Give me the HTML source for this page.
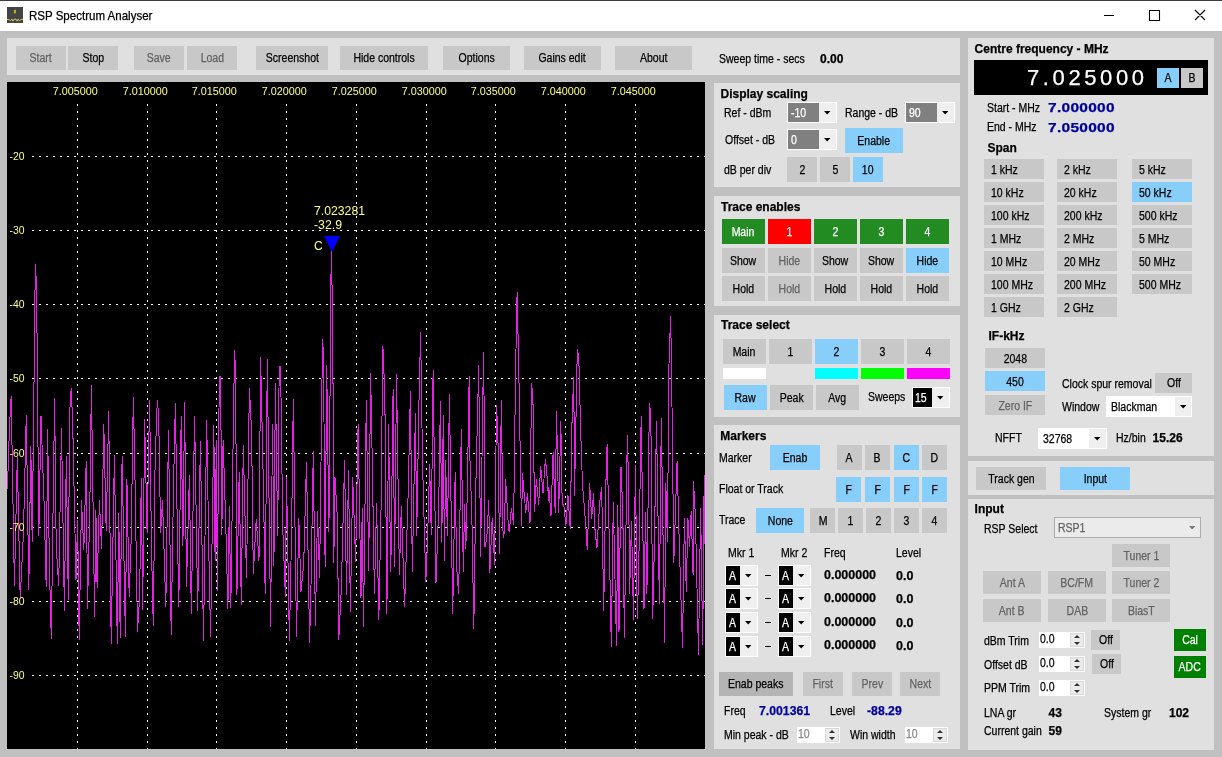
<!DOCTYPE html>
<html lang="en"><head><meta charset="utf-8"><title>RSP Spectrum Analyser</title><style>
html,body{margin:0;padding:0}
body{width:1222px;height:757px;overflow:hidden;position:relative;background:#c0c0c0;font-family:"Liberation Sans",sans-serif;font-size:12px;color:#000}
#w{position:absolute;left:0;top:0;width:1222px;height:757px;will-change:transform}
#w>div{position:absolute}
#w>svg{position:absolute;display:block}
.t,.n{-webkit-text-stroke:0.25px currentColor}
.b{display:flex;align-items:center;justify-content:center;white-space:nowrap;box-sizing:content-box}
.b.l{justify-content:flex-start}
.n{display:inline-block;transform:scaleX(.875)}
.ol{transform-origin:0 50%}
.bd{display:inline-block;font-weight:bold}
.t{white-space:nowrap;transform-origin:0 50%}
</style></head>
<body>
<div id="w">
<div style="left:0px;top:0px;width:1222px;height:31px;background:#fff;"></div>
<div style="left:0px;top:0px;width:1222px;height:1px;background:#3c3c3c;"></div>
<svg style="left:7px;top:7px" width="16" height="16" viewBox="0 0 16 16"><rect width="16" height="16" fill="#444"/><rect x="6.8" y="2.8" width="2.2" height="3.6" fill="#c9a227"/><path d="M0 12.3L2 12.5L3.5 13.8L5 12L6 14.2L7 12.2H9L10 14.2L11 12L12.5 13.8L14 12.5L16 12.3" stroke="#d8c060" stroke-width="1" fill="none"/></svg>
<div class="t" style="left:28.5px;top:8.7px;font-size:12px;line-height:14px;color:#000;transform:scaleX(0.93);font-size:12.4px;">RSP Spectrum Analyser</div>
<svg style="left:1100px;top:5px" width="112" height="22" viewBox="0 0 112 22"><path d="M4 10.5H14 M49.5 5.5H59.5V15.5H49.5Z M95 5L105 15 M105 5L95 15" stroke="#000" stroke-width="1.1" fill="none"/></svg>
<div style="left:7px;top:38px;width:953px;height:37px;background:#e0e0e0;"></div>
<div class="b" style="left:16px;top:46px;width:50px;height:24px;background:#c8c8c8;color:#636363;"><span class="n">Start</span></div>
<div class="b" style="left:68px;top:46px;width:50px;height:24px;background:#c8c8c8;color:#000;"><span class="n">Stop</span></div>
<div class="b" style="left:134px;top:46px;width:50px;height:24px;background:#c8c8c8;color:#636363;"><span class="n">Save</span></div>
<div class="b" style="left:187px;top:46px;width:50px;height:24px;background:#c8c8c8;color:#636363;"><span class="n">Load</span></div>
<div class="b" style="left:256px;top:46px;width:72px;height:24px;background:#c8c8c8;color:#000;"><span class="n">Screenshot</span></div>
<div class="b" style="left:340px;top:46px;width:88px;height:24px;background:#c8c8c8;color:#000;"><span class="n">Hide controls</span></div>
<div class="b" style="left:443px;top:46px;width:67px;height:24px;background:#c8c8c8;color:#000;"><span class="n">Options</span></div>
<div class="b" style="left:524px;top:46px;width:77px;height:24px;background:#c8c8c8;color:#000;"><span class="n">Gains edit</span></div>
<div class="b" style="left:615px;top:46px;width:77px;height:24px;background:#c8c8c8;color:#000;"><span class="n">About</span></div>
<div class="t" style="left:719px;top:51.8px;font-size:12px;line-height:14px;color:#000;transform:scaleX(0.875);">Sweep time - secs</div>
<div class="t" style="left:820px;top:51.8px;font-size:12px;line-height:14px;color:#000;font-weight:bold;">0.00</div>
<svg style="left:7px;top:82px" width="698" height="667" viewBox="0 0 698 667"><rect width="698" height="667" fill="#000"/><g stroke="#fff" stroke-width="1" stroke-dasharray="2 5" fill="none" shape-rendering="crispEdges"><path d="M25 74.5H698"/><path d="M25 148.5H698"/><path d="M25 222.5H698"/><path d="M25 296.5H698"/><path d="M25 371.5H698"/><path d="M25 445.5H698"/><path d="M25 519.5H698"/><path d="M25 593.5H698"/><path d="M70.5 22V667"/><path d="M140.5 22V667"/><path d="M209.5 22V667"/><path d="M279.5 22V667"/><path d="M349.5 22V667"/><path d="M419.5 22V667"/><path d="M488.5 22V667"/><path d="M558.5 22V667"/><path d="M628.5 22V667"/></g><polyline points="0.4,407.0 2.5,344.2 4.2,314.2 7.4,503.8 10.3,375.1 13.2,516.3 16.4,452.7 19.3,332.8 21.8,507.6 23.8,364.5 25.2,460.3 26.7,329.9 28.3,181.9 29.6,203.7 31.8,453.7 34.0,333.8 37.1,421.8 39.2,504.7 40.7,346.8 42.3,480.6 44.3,556.7 47.6,316.1 49.2,464.0 51.7,503.8 54.5,346.3 57.4,528.8 59.3,374.2 61.3,518.2 62.6,331.8 64.2,305.9 65.7,341.5 69.0,498.0 70.6,438.1 72.2,557.6 74.5,418.5 76.8,468.4 79.2,379.0 80.5,526.8 82.8,425.8 84.4,302.8 87.6,534.5 88.9,428.4 90.1,505.7 92.4,418.0 94.6,467.3 96.8,342.4 99.2,449.4 101.7,329.0 104.2,562.4 107.4,373.2 110.3,562.4 111.8,430.7 113.2,555.7 115.1,374.2 118.4,554.7 119.9,397.2 122.2,515.3 124.2,457.0 126.3,314.9 127.6,372.2 130.5,549.9 132.6,515.6 134.3,396.3 135.7,527.8 137.6,336.7 140.1,450.7 142.6,318.0 144.5,467.0 146.3,544.2 148.1,380.1 150.3,318.0 151.7,333.8 153.6,451.4 155.5,418.4 158.8,524.9 161.5,348.2 164.2,552.8 166.4,409.6 168.4,320.7 170.1,432.6 171.8,524.9 174.2,333.8 175.9,464.1 177.6,319.9 179.5,504.7 182.4,393.4 184.3,531.7 187.6,333.8 190.7,528.8 193.4,358.8 196.5,558.6 199.7,337.6 202.2,490.5 203.6,554.7 206.8,343.4 208.1,479.4 209.3,357.8 210.3,508.6 212.3,295.0 213.6,294.2 214.8,452.7 216.1,357.8 218.7,439.7 220.9,526.8 222.3,423.6 223.8,525.9 226.7,318.4 227.6,268.0 228.6,293.0 229.9,513.4 232.2,390.5 234.3,523.0 236.3,363.0 239.5,496.1 242.4,305.9 244.6,349.9 246.3,492.2 249.2,437.3 252.0,478.8 253.6,274.7 256.6,414.6 258.2,512.4 260.3,277.2 263.6,545.1 265.5,342.4 266.9,484.0 268.4,301.3 270.7,453.8 272.2,284.0 273.6,284.0 275.7,444.3 278.4,515.3 279.5,395.3 282.4,559.2 284.5,454.6 286.3,316.8 289.5,555.3 291.8,435.6 294.0,509.5 296.7,481.9 299.5,379.9 302.6,560.5 304.0,503.0 306.3,369.3 308.4,544.2 310.5,429.5 312.6,496.1 315.5,257.0 316.5,273.4 318.1,485.1 319.7,283.0 321.9,449.8 324.2,169.5 325.7,229.5 326.8,480.6 328.0,395.3 330.2,433.5 331.8,557.6 334.3,507.8 337.6,378.0 339.5,513.4 341.5,387.6 343.4,529.7 345.7,395.3 348.6,479.7 351.1,342.4 354.0,516.3 355.2,425.8 356.5,545.1 359.3,318.0 361.7,489.3 363.6,290.7 365.5,391.5 367.4,512.4 369.6,420.9 371.8,538.4 374.2,419.0 375.7,263.8 376.5,271.5 378.1,336.1 379.9,531.7 381.5,342.4 383.8,490.3 386.1,306.8 387.6,484.5 389.5,292.0 392.4,493.2 394.3,424.2 397.6,524.9 401.2,410.4 403.4,308.8 405.3,490.3 408.4,330.9 409.7,453.8 412.1,312.8 413.6,249.9 415.5,379.0 418.8,499.9 420.6,456.6 422.6,381.8 424.3,452.5 426.1,288.2 429.0,500.9 431.7,425.5 433.4,319.3 434.8,459.7 436.3,332.8 437.4,479.0 438.6,378.0 440.5,453.8 442.4,311.7 445.7,531.7 448.2,390.5 449.6,484.9 451.7,512.4 454.3,347.2 456.3,490.3 457.5,422.1 458.8,467.2 460.2,414.4 462.2,294.5 463.0,379.0 464.9,436.1 466.8,547.0 468.9,400.9 471.7,283.0 473.6,474.9 476.5,269.9 477.4,346.3 478.0,465.3 479.8,455.8 481.8,418.4 482.8,491.3 485.2,435.8 487.6,482.6 489.5,323.2 490.9,353.0 492.6,472.3 494.3,318.0 496.1,455.7 497.3,451.0 498.6,397.2 501.6,448.0 502.4,449.9 504.3,426.1 506.6,442.6 508.6,287.8 510.1,209.9 511.7,283.0 514.5,444.0 515.5,391.5 518.8,431.0 520.3,410.7 523.0,441.0 524.5,301.3 525.9,314.5 527.6,429.6 529.3,397.2 531.7,422.5 533.6,383.8 536.0,411.0 538.4,377.0 540.1,394.7 541.7,419.0 541.8,404.9 544.0,433.6 546.1,370.3 548.2,431.0 549.5,329.0 551.7,431.0 553.8,339.5 555.2,422.4 556.7,422.2 558.9,444.0 561.0,413.3 563.2,446.9 565.2,329.6 566.8,294.9 567.5,414.0 570.3,267.0 571.8,276.3 573.6,346.3 575.5,403.0 577.4,425.4 579.0,447.0 580.3,468.2 582.6,401.1 584.7,436.8 586.5,410.7 587.7,444.4 589.9,466.3 592.7,420.9 594.7,404.9 596.7,528.8 598.7,407.9 600.1,362.0 602.1,450.5 604.3,565.3 606.3,420.3 609.5,564.3 610.8,423.0 612.0,549.9 614.0,384.7 615.8,429.5 617.4,555.7 620.3,353.0 621.7,405.9 622.6,511.5 624.5,439.1 626.5,538.4 628.4,382.8 630.3,537.4 631.7,489.1 634.2,333.8 637.0,526.8 638.5,430.5 639.9,511.5 642.4,321.3 643.8,331.8 645.7,536.5 647.2,472.1 649.5,338.6 652.4,522.0 654.3,336.1 657.6,560.5 658.8,401.1 660.4,459.9 662.0,282.0 663.6,234.0 664.5,281.1 666.8,480.7 670.1,379.0 672.1,454.6 675.5,566.3 677.4,435.9 679.3,509.5 680.9,435.7 682.5,465.2 684.2,429.0 686.1,493.2 686.5,399.2 688.4,433.9 691.5,572.6 693.6,426.2 695.7,563.4 697.2,393.4 698.2,478.0" fill="none" stroke="#e620e6" stroke-width="1" stroke-linejoin="miter" stroke-miterlimit="2" shape-rendering="crispEdges"/><polygon points="317,154 333,154 325,170" fill="#0000ff"/><g fill="#ffff80" font-family="Liberation Sans, sans-serif" font-size="11.5"><text x="68.2" y="13" text-anchor="middle" textLength="45" lengthAdjust="spacingAndGlyphs">7.005000</text><text x="138.2" y="13" text-anchor="middle" textLength="45" lengthAdjust="spacingAndGlyphs">7.010000</text><text x="207.2" y="13" text-anchor="middle" textLength="45" lengthAdjust="spacingAndGlyphs">7.015000</text><text x="277.2" y="13" text-anchor="middle" textLength="45" lengthAdjust="spacingAndGlyphs">7.020000</text><text x="347.2" y="13" text-anchor="middle" textLength="45" lengthAdjust="spacingAndGlyphs">7.025000</text><text x="417.2" y="13" text-anchor="middle" textLength="45" lengthAdjust="spacingAndGlyphs">7.030000</text><text x="486.2" y="13" text-anchor="middle" textLength="45" lengthAdjust="spacingAndGlyphs">7.035000</text><text x="556.2" y="13" text-anchor="middle" textLength="45" lengthAdjust="spacingAndGlyphs">7.040000</text><text x="626.2" y="13" text-anchor="middle" textLength="45" lengthAdjust="spacingAndGlyphs">7.045000</text><text x="2.5" y="78.3" textLength="15" lengthAdjust="spacingAndGlyphs">-20</text><text x="2.5" y="152.3" textLength="15" lengthAdjust="spacingAndGlyphs">-30</text><text x="2.5" y="226.3" textLength="15" lengthAdjust="spacingAndGlyphs">-40</text><text x="2.5" y="300.3" textLength="15" lengthAdjust="spacingAndGlyphs">-50</text><text x="2.5" y="375.3" textLength="15" lengthAdjust="spacingAndGlyphs">-60</text><text x="2.5" y="449.3" textLength="15" lengthAdjust="spacingAndGlyphs">-70</text><text x="2.5" y="523.3" textLength="15" lengthAdjust="spacingAndGlyphs">-80</text><text x="2.5" y="597.3" textLength="15" lengthAdjust="spacingAndGlyphs">-90</text><text x="307" y="133" textLength="51" lengthAdjust="spacingAndGlyphs" font-size="12">7.023281</text><text x="307" y="147" textLength="28" lengthAdjust="spacingAndGlyphs" font-size="12">-32.9</text><text x="307" y="168" font-size="12">C</text></g></svg>
<div style="left:714px;top:83px;width:246px;height:104px;background:#e0e0e0;"></div>
<div class="t" style="left:720.5px;top:87.0px;font-size:12px;line-height:14px;color:#000;font-weight:bold;">Display scaling</div>
<div class="t" style="left:724.3px;top:106.4px;font-size:12px;line-height:14px;color:#000;transform:scaleX(0.875);">Ref - dBm</div>
<div style="left:787px;top:102px;width:50px;height:21px;background:#fff;"></div>
<div style="left:788px;top:103px;width:48px;height:19px;background:#efefef;"></div>
<div style="left:788px;top:103px;width:31px;height:19px;background:#808080;"></div>
<div class="t" style="left:791px;top:105.6px;font-size:12px;line-height:14px;color:#fff;transform:scaleX(0.875);">-10</div>
<svg style="left:824.3px;top:111.0px" width="6.4" height="3.6" viewBox="0 0 6.4 3.6"><polygon points="0,0 6.4,0 3.2,3.6" fill="#000"/></svg>
<div class="t" style="left:845.4px;top:106.4px;font-size:12px;line-height:14px;color:#000;transform:scaleX(0.875);">Range - dB</div>
<div style="left:905px;top:102px;width:50px;height:21px;background:#fff;"></div>
<div style="left:906px;top:103px;width:48px;height:19px;background:#efefef;"></div>
<div style="left:906px;top:103px;width:31px;height:19px;background:#808080;"></div>
<div class="t" style="left:909px;top:105.6px;font-size:12px;line-height:14px;color:#fff;transform:scaleX(0.875);">90</div>
<svg style="left:942.3px;top:111.0px" width="6.4" height="3.6" viewBox="0 0 6.4 3.6"><polygon points="0,0 6.4,0 3.2,3.6" fill="#000"/></svg>
<div class="t" style="left:725.4px;top:132.7px;font-size:12px;line-height:14px;color:#000;transform:scaleX(0.875);">Offset - dB</div>
<div style="left:787px;top:129px;width:50px;height:21px;background:#fff;"></div>
<div style="left:788px;top:130px;width:48px;height:19px;background:#efefef;"></div>
<div style="left:788px;top:130px;width:31px;height:19px;background:#808080;"></div>
<div class="t" style="left:791px;top:132.6px;font-size:12px;line-height:14px;color:#fff;transform:scaleX(0.875);">0</div>
<svg style="left:824.3px;top:138.0px" width="6.4" height="3.6" viewBox="0 0 6.4 3.6"><polygon points="0,0 6.4,0 3.2,3.6" fill="#000"/></svg>
<div class="b" style="left:845px;top:128px;width:58px;height:25px;background:#87cefa;color:#000;"><span class="n">Enable</span></div>
<div class="t" style="left:724.3px;top:162.8px;font-size:12px;line-height:14px;color:#000;transform:scaleX(0.875);">dB per div</div>
<div class="b" style="left:787px;top:157px;width:30px;height:25px;background:#c8c8c8;color:#000;"><span class="n">2</span></div>
<div class="b" style="left:820px;top:157px;width:30px;height:25px;background:#c8c8c8;color:#000;"><span class="n">5</span></div>
<div class="b" style="left:853px;top:157px;width:30px;height:25px;background:#87cefa;color:#000;"><span class="n">10</span></div>
<div style="left:714px;top:196px;width:246px;height:110px;background:#e0e0e0;"></div>
<div class="t" style="left:721px;top:199.8px;font-size:12px;line-height:14px;color:#000;font-weight:bold;">Trace enables</div>
<div class="b" style="left:722px;top:219px;width:43px;height:25px;background:#228b22;color:#fff;"><span class="n">Main</span></div>
<div class="b" style="left:768px;top:219px;width:43px;height:25px;background:#ff0000;color:#fff;"><span class="n">1</span></div>
<div class="b" style="left:814px;top:219px;width:43px;height:25px;background:#228b22;color:#fff;"><span class="n">2</span></div>
<div class="b" style="left:860px;top:219px;width:43px;height:25px;background:#228b22;color:#fff;"><span class="n">3</span></div>
<div class="b" style="left:906px;top:219px;width:43px;height:25px;background:#228b22;color:#fff;"><span class="n">4</span></div>
<div class="b" style="left:722px;top:248px;width:43px;height:25px;background:#c8c8c8;color:#000;"><span class="n">Show</span></div>
<div class="b" style="left:768px;top:248px;width:43px;height:25px;background:#c8c8c8;color:#636363;"><span class="n">Hide</span></div>
<div class="b" style="left:814px;top:248px;width:43px;height:25px;background:#c8c8c8;color:#000;"><span class="n">Show</span></div>
<div class="b" style="left:860px;top:248px;width:43px;height:25px;background:#c8c8c8;color:#000;"><span class="n">Show</span></div>
<div class="b" style="left:906px;top:248px;width:43px;height:25px;background:#87cefa;color:#000;"><span class="n">Hide</span></div>
<div class="b" style="left:722px;top:276px;width:43px;height:25px;background:#c8c8c8;color:#000;"><span class="n">Hold</span></div>
<div class="b" style="left:768px;top:276px;width:43px;height:25px;background:#c8c8c8;color:#636363;"><span class="n">Hold</span></div>
<div class="b" style="left:814px;top:276px;width:43px;height:25px;background:#c8c8c8;color:#000;"><span class="n">Hold</span></div>
<div class="b" style="left:860px;top:276px;width:43px;height:25px;background:#c8c8c8;color:#000;"><span class="n">Hold</span></div>
<div class="b" style="left:906px;top:276px;width:43px;height:25px;background:#c8c8c8;color:#000;"><span class="n">Hold</span></div>
<div style="left:714px;top:315px;width:246px;height:102px;background:#e0e0e0;"></div>
<div class="t" style="left:721px;top:317.7px;font-size:12px;line-height:14px;color:#000;font-weight:bold;">Trace select</div>
<div class="b" style="left:723px;top:339px;width:43px;height:25px;background:#c8c8c8;color:#000;"><span class="n">Main</span></div>
<div class="b" style="left:769px;top:339px;width:43px;height:25px;background:#c8c8c8;color:#000;"><span class="n">1</span></div>
<div class="b" style="left:815px;top:339px;width:43px;height:25px;background:#87cefa;color:#000;"><span class="n">2</span></div>
<div class="b" style="left:861px;top:339px;width:43px;height:25px;background:#c8c8c8;color:#000;"><span class="n">3</span></div>
<div class="b" style="left:907px;top:339px;width:43px;height:25px;background:#c8c8c8;color:#000;"><span class="n">4</span></div>
<div style="left:723px;top:368px;width:43px;height:11px;background:#fff;"></div>
<div style="left:815px;top:368px;width:43px;height:11px;background:#00ffff;"></div>
<div style="left:861px;top:368px;width:43px;height:11px;background:#00ff00;"></div>
<div style="left:907px;top:368px;width:43px;height:11px;background:#ff00ff;"></div>
<div class="b" style="left:724px;top:385px;width:43px;height:25px;background:#87cefa;color:#000;"><span class="n">Raw</span></div>
<div class="b" style="left:770px;top:385px;width:43px;height:25px;background:#c8c8c8;color:#000;"><span class="n">Peak</span></div>
<div class="b" style="left:816px;top:385px;width:43px;height:25px;background:#c8c8c8;color:#000;"><span class="n">Avg</span></div>
<div class="t" style="left:868.4px;top:390.3px;font-size:12px;line-height:14px;color:#000;transform:scaleX(0.875);">Sweeps</div>
<div style="left:912px;top:387px;width:38px;height:21px;background:#fff;"></div>
<div style="left:913px;top:388px;width:36px;height:19px;background:#efefef;"></div>
<div style="left:913px;top:388px;width:19px;height:19px;background:#000;"></div>
<div class="t" style="left:915px;top:390.6px;font-size:12px;line-height:14px;color:#fff;transform:scaleX(0.875);">15</div>
<svg style="left:937.3px;top:396.0px" width="6.4" height="3.6" viewBox="0 0 6.4 3.6"><polygon points="0,0 6.4,0 3.2,3.6" fill="#000"/></svg>
<div style="left:714px;top:425px;width:246px;height:324px;background:#e0e0e0;"></div>
<div class="t" style="left:720.3px;top:428.7px;font-size:12px;line-height:14px;color:#000;font-weight:bold;">Markers</div>
<div class="t" style="left:719.4px;top:451.4px;font-size:12px;line-height:14px;color:#000;transform:scaleX(0.875);">Marker</div>
<div class="b" style="left:770px;top:445px;width:50px;height:25px;background:#87cefa;color:#000;"><span class="n">Enab</span></div>
<div class="b" style="left:837px;top:445px;width:25px;height:25px;background:#c8c8c8;color:#000;"><span class="n">A</span></div>
<div class="b" style="left:865px;top:445px;width:25px;height:25px;background:#c8c8c8;color:#000;"><span class="n">B</span></div>
<div class="b" style="left:894px;top:445px;width:25px;height:25px;background:#87cefa;color:#000;"><span class="n">C</span></div>
<div class="b" style="left:922px;top:445px;width:25px;height:25px;background:#c8c8c8;color:#000;"><span class="n">D</span></div>
<div class="t" style="left:719.4px;top:481.7px;font-size:12px;line-height:14px;color:#000;transform:scaleX(0.875);">Float or Track</div>
<div class="b" style="left:836px;top:477px;width:25px;height:25px;background:#87cefa;color:#000;"><span class="n">F</span></div>
<div class="b" style="left:865px;top:477px;width:25px;height:25px;background:#87cefa;color:#000;"><span class="n">F</span></div>
<div class="b" style="left:894px;top:477px;width:25px;height:25px;background:#87cefa;color:#000;"><span class="n">F</span></div>
<div class="b" style="left:922px;top:477px;width:25px;height:25px;background:#87cefa;color:#000;"><span class="n">F</span></div>
<div class="t" style="left:719.4px;top:512.6px;font-size:12px;line-height:14px;color:#000;transform:scaleX(0.875);">Trace</div>
<div class="b" style="left:756px;top:508px;width:48px;height:25px;background:#87cefa;color:#000;"><span class="n">None</span></div>
<div class="b" style="left:810px;top:508px;width:25px;height:25px;background:#c8c8c8;color:#000;"><span class="n">M</span></div>
<div class="b" style="left:838px;top:508px;width:25px;height:25px;background:#c8c8c8;color:#000;"><span class="n">1</span></div>
<div class="b" style="left:866px;top:508px;width:25px;height:25px;background:#c8c8c8;color:#000;"><span class="n">2</span></div>
<div class="b" style="left:894px;top:508px;width:25px;height:25px;background:#c8c8c8;color:#000;"><span class="n">3</span></div>
<div class="b" style="left:922px;top:508px;width:25px;height:25px;background:#c8c8c8;color:#000;"><span class="n">4</span></div>
<div class="t" style="left:728.3px;top:545.9px;font-size:12px;line-height:14px;color:#000;transform:scaleX(0.875);">Mkr 1</div>
<div class="t" style="left:781.3px;top:545.9px;font-size:12px;line-height:14px;color:#000;transform:scaleX(0.875);">Mkr 2</div>
<div class="t" style="left:824.4px;top:545.9px;font-size:12px;line-height:14px;color:#000;transform:scaleX(0.875);">Freq</div>
<div class="t" style="left:896.2px;top:545.9px;font-size:12px;line-height:14px;color:#000;transform:scaleX(0.875);">Level</div>
<div style="left:725px;top:565px;width:33px;height:21px;background:#fff;"></div>
<div style="left:726px;top:566px;width:31px;height:19px;background:#efefef;"></div>
<div style="left:726px;top:566px;width:14px;height:19px;background:#000;"></div>
<div class="t" style="left:729px;top:568.6px;font-size:12px;line-height:14px;color:#fff;transform:scaleX(0.875);">A</div>
<svg style="left:745.3px;top:574.0px" width="6.4" height="3.6" viewBox="0 0 6.4 3.6"><polygon points="0,0 6.4,0 3.2,3.6" fill="#000"/></svg>
<div style="left:778px;top:565px;width:33px;height:21px;background:#fff;"></div>
<div style="left:779px;top:566px;width:31px;height:19px;background:#efefef;"></div>
<div style="left:779px;top:566px;width:14px;height:19px;background:#000;"></div>
<div class="t" style="left:782px;top:568.6px;font-size:12px;line-height:14px;color:#fff;transform:scaleX(0.875);">A</div>
<svg style="left:798.3px;top:574.0px" width="6.4" height="3.6" viewBox="0 0 6.4 3.6"><polygon points="0,0 6.4,0 3.2,3.6" fill="#000"/></svg>
<div style="left:764.5px;top:574.5px;width:6px;height:1px;background:#000;"></div>
<div class="t" style="left:824px;top:568.0px;font-size:12px;line-height:14px;color:#000;font-weight:bold;transform:scaleX(1.04);">0.000000</div>
<div class="t" style="left:895.8px;top:569.2px;font-size:12px;line-height:14px;color:#000;font-weight:bold;transform:scaleX(1.04);">0.0</div>
<div style="left:725px;top:588px;width:33px;height:21px;background:#fff;"></div>
<div style="left:726px;top:589px;width:31px;height:19px;background:#efefef;"></div>
<div style="left:726px;top:589px;width:14px;height:19px;background:#000;"></div>
<div class="t" style="left:729px;top:591.6px;font-size:12px;line-height:14px;color:#fff;transform:scaleX(0.875);">A</div>
<svg style="left:745.3px;top:597.0px" width="6.4" height="3.6" viewBox="0 0 6.4 3.6"><polygon points="0,0 6.4,0 3.2,3.6" fill="#000"/></svg>
<div style="left:778px;top:588px;width:33px;height:21px;background:#fff;"></div>
<div style="left:779px;top:589px;width:31px;height:19px;background:#efefef;"></div>
<div style="left:779px;top:589px;width:14px;height:19px;background:#000;"></div>
<div class="t" style="left:782px;top:591.6px;font-size:12px;line-height:14px;color:#fff;transform:scaleX(0.875);">A</div>
<svg style="left:798.3px;top:597.0px" width="6.4" height="3.6" viewBox="0 0 6.4 3.6"><polygon points="0,0 6.4,0 3.2,3.6" fill="#000"/></svg>
<div style="left:764.5px;top:597.5px;width:6px;height:1px;background:#000;"></div>
<div class="t" style="left:824px;top:591.0px;font-size:12px;line-height:14px;color:#000;font-weight:bold;transform:scaleX(1.04);">0.000000</div>
<div class="t" style="left:895.8px;top:592.2px;font-size:12px;line-height:14px;color:#000;font-weight:bold;transform:scaleX(1.04);">0.0</div>
<div style="left:725px;top:612px;width:33px;height:21px;background:#fff;"></div>
<div style="left:726px;top:613px;width:31px;height:19px;background:#efefef;"></div>
<div style="left:726px;top:613px;width:14px;height:19px;background:#000;"></div>
<div class="t" style="left:729px;top:615.6px;font-size:12px;line-height:14px;color:#fff;transform:scaleX(0.875);">A</div>
<svg style="left:745.3px;top:621.0px" width="6.4" height="3.6" viewBox="0 0 6.4 3.6"><polygon points="0,0 6.4,0 3.2,3.6" fill="#000"/></svg>
<div style="left:778px;top:612px;width:33px;height:21px;background:#fff;"></div>
<div style="left:779px;top:613px;width:31px;height:19px;background:#efefef;"></div>
<div style="left:779px;top:613px;width:14px;height:19px;background:#000;"></div>
<div class="t" style="left:782px;top:615.6px;font-size:12px;line-height:14px;color:#fff;transform:scaleX(0.875);">A</div>
<svg style="left:798.3px;top:621.0px" width="6.4" height="3.6" viewBox="0 0 6.4 3.6"><polygon points="0,0 6.4,0 3.2,3.6" fill="#000"/></svg>
<div style="left:764.5px;top:621.5px;width:6px;height:1px;background:#000;"></div>
<div class="t" style="left:824px;top:614.5px;font-size:12px;line-height:14px;color:#000;font-weight:bold;transform:scaleX(1.04);">0.000000</div>
<div class="t" style="left:895.8px;top:615.7px;font-size:12px;line-height:14px;color:#000;font-weight:bold;transform:scaleX(1.04);">0.0</div>
<div style="left:725px;top:636px;width:33px;height:21px;background:#fff;"></div>
<div style="left:726px;top:637px;width:31px;height:19px;background:#efefef;"></div>
<div style="left:726px;top:637px;width:14px;height:19px;background:#000;"></div>
<div class="t" style="left:729px;top:639.6px;font-size:12px;line-height:14px;color:#fff;transform:scaleX(0.875);">A</div>
<svg style="left:745.3px;top:645.0px" width="6.4" height="3.6" viewBox="0 0 6.4 3.6"><polygon points="0,0 6.4,0 3.2,3.6" fill="#000"/></svg>
<div style="left:778px;top:636px;width:33px;height:21px;background:#fff;"></div>
<div style="left:779px;top:637px;width:31px;height:19px;background:#efefef;"></div>
<div style="left:779px;top:637px;width:14px;height:19px;background:#000;"></div>
<div class="t" style="left:782px;top:639.6px;font-size:12px;line-height:14px;color:#fff;transform:scaleX(0.875);">A</div>
<svg style="left:798.3px;top:645.0px" width="6.4" height="3.6" viewBox="0 0 6.4 3.6"><polygon points="0,0 6.4,0 3.2,3.6" fill="#000"/></svg>
<div style="left:764.5px;top:645.5px;width:6px;height:1px;background:#000;"></div>
<div class="t" style="left:824px;top:637.7px;font-size:12px;line-height:14px;color:#000;font-weight:bold;transform:scaleX(1.04);">0.000000</div>
<div class="t" style="left:895.8px;top:638.9px;font-size:12px;line-height:14px;color:#000;font-weight:bold;transform:scaleX(1.04);">0.0</div>
<div class="b" style="left:719px;top:672px;width:74px;height:24px;background:#b4b4b4;color:#000;"><span class="n">Enab peaks</span></div>
<div class="b" style="left:803px;top:672px;width:40px;height:24px;background:#c8c8c8;color:#636363;"><span class="n">First</span></div>
<div class="b" style="left:852px;top:672px;width:40px;height:24px;background:#c8c8c8;color:#636363;"><span class="n">Prev</span></div>
<div class="b" style="left:900px;top:672px;width:40px;height:24px;background:#c8c8c8;color:#636363;"><span class="n">Next</span></div>
<div class="t" style="left:724.3px;top:703.5px;font-size:12px;line-height:14px;color:#000;transform:scaleX(0.875);">Freq</div>
<div class="t" style="left:758.6px;top:703.5px;font-size:12px;line-height:14px;color:#0000a0;font-weight:bold;transform:scaleX(1.02);">7.001361</div>
<div class="t" style="left:829.7px;top:703.5px;font-size:12px;line-height:14px;color:#000;transform:scaleX(0.875);">Level</div>
<div class="t" style="left:866.8px;top:703.5px;font-size:12px;line-height:14px;color:#0000a0;font-weight:bold;transform:scaleX(1.02);">-88.29</div>
<div class="t" style="left:724.3px;top:728.3px;font-size:12px;line-height:14px;color:#000;transform:scaleX(0.875);">Min peak - dB</div>
<div style="left:797px;top:727px;width:43px;height:16px;background:#fff;"></div>
<div style="left:825px;top:728px;width:14px;height:14px;background:#ececec;box-shadow:inset 0 0 0 1px #d8d8d8;"></div>
<svg style="left:829.0px;top:730px" width="6" height="3" viewBox="0 0 6 3"><polygon points="0,3 6,3 3,0" fill="#333"/></svg>
<svg style="left:829.0px;top:737px" width="6" height="3" viewBox="0 0 6 3"><polygon points="0,0 6,0 3,3" fill="#333"/></svg>
<div class="t" style="left:798px;top:726.6px;font-size:12px;line-height:14px;color:#8a8a8a;transform:scaleX(0.875);">10</div>
<div class="t" style="left:850.2px;top:728.3px;font-size:12px;line-height:14px;color:#000;transform:scaleX(0.875);">Win width</div>
<div style="left:905px;top:727px;width:43px;height:16px;background:#fff;"></div>
<div style="left:933px;top:728px;width:14px;height:14px;background:#ececec;box-shadow:inset 0 0 0 1px #d8d8d8;"></div>
<svg style="left:937.0px;top:730px" width="6" height="3" viewBox="0 0 6 3"><polygon points="0,3 6,3 3,0" fill="#333"/></svg>
<svg style="left:937.0px;top:737px" width="6" height="3" viewBox="0 0 6 3"><polygon points="0,0 6,0 3,3" fill="#333"/></svg>
<div class="t" style="left:906px;top:726.6px;font-size:12px;line-height:14px;color:#8a8a8a;transform:scaleX(0.875);">10</div>
<div style="left:968px;top:38px;width:246px;height:418px;background:#e0e0e0;"></div>
<div class="t" style="left:974.6px;top:41.7px;font-size:12px;line-height:14px;color:#000;font-weight:bold;">Centre frequency - MHz</div>
<div style="left:974px;top:60px;width:234px;height:35px;background:#000;"></div>
<div class="t" style="left:1027px;top:65.7px;font-size:22px;line-height:24px;color:#fff;letter-spacing:3.6px;">7.025000</div>
<div class="b" style="left:1157px;top:68px;width:22px;height:20px;background:#87cefa;color:#000;"><span class="n">A</span></div>
<div class="b" style="left:1181px;top:68px;width:22px;height:20px;background:#c8c8c8;color:#000;"><span class="n">B</span></div>
<div class="t" style="left:987.4px;top:100.7px;font-size:12px;line-height:14px;color:#000;transform:scaleX(0.875);">Start - MHz</div>
<div class="t" style="left:1047.9px;top:100.0px;font-size:13px;line-height:15px;color:#00009c;font-weight:bold;transform:scaleX(1.19);letter-spacing:0.25px;">7.000000</div>
<div class="t" style="left:987.4px;top:120.0px;font-size:12px;line-height:14px;color:#000;transform:scaleX(0.875);">End - MHz</div>
<div class="t" style="left:1047.9px;top:120.0px;font-size:13px;line-height:15px;color:#00009c;font-weight:bold;transform:scaleX(1.19);letter-spacing:0.25px;">7.050000</div>
<div class="t" style="left:987.4px;top:140.6px;font-size:12px;line-height:14px;color:#000;font-weight:bold;">Span</div>
<div class="b l" style="left:984px;top:159px;width:60px;height:20px;background:#c8c8c8;color:#000;padding-left:7px;width:53px;"><span class="n ol" style="position:relative;top:1px">1 kHz</span></div>
<div class="b l" style="left:1057px;top:159px;width:60px;height:20px;background:#c8c8c8;color:#000;padding-left:7px;width:53px;"><span class="n ol" style="position:relative;top:1px">2 kHz</span></div>
<div class="b l" style="left:1132px;top:159px;width:60px;height:20px;background:#c8c8c8;color:#000;padding-left:7px;width:53px;"><span class="n ol" style="position:relative;top:1px">5 kHz</span></div>
<div class="b l" style="left:984px;top:182px;width:60px;height:20px;background:#c8c8c8;color:#000;padding-left:7px;width:53px;"><span class="n ol" style="position:relative;top:1px">10 kHz</span></div>
<div class="b l" style="left:1057px;top:182px;width:60px;height:20px;background:#c8c8c8;color:#000;padding-left:7px;width:53px;"><span class="n ol" style="position:relative;top:1px">20 kHz</span></div>
<div class="b l" style="left:1132px;top:182px;width:60px;height:20px;background:#87cefa;color:#000;padding-left:7px;width:53px;"><span class="n ol" style="position:relative;top:1px">50 kHz</span></div>
<div class="b l" style="left:984px;top:205px;width:60px;height:20px;background:#c8c8c8;color:#000;padding-left:7px;width:53px;"><span class="n ol" style="position:relative;top:1px">100 kHz</span></div>
<div class="b l" style="left:1057px;top:205px;width:60px;height:20px;background:#c8c8c8;color:#000;padding-left:7px;width:53px;"><span class="n ol" style="position:relative;top:1px">200 kHz</span></div>
<div class="b l" style="left:1132px;top:205px;width:60px;height:20px;background:#c8c8c8;color:#000;padding-left:7px;width:53px;"><span class="n ol" style="position:relative;top:1px">500 kHz</span></div>
<div class="b l" style="left:984px;top:228px;width:60px;height:20px;background:#c8c8c8;color:#000;padding-left:7px;width:53px;"><span class="n ol" style="position:relative;top:1px">1 MHz</span></div>
<div class="b l" style="left:1057px;top:228px;width:60px;height:20px;background:#c8c8c8;color:#000;padding-left:7px;width:53px;"><span class="n ol" style="position:relative;top:1px">2 MHz</span></div>
<div class="b l" style="left:1132px;top:228px;width:60px;height:20px;background:#c8c8c8;color:#000;padding-left:7px;width:53px;"><span class="n ol" style="position:relative;top:1px">5 MHz</span></div>
<div class="b l" style="left:984px;top:251px;width:60px;height:20px;background:#c8c8c8;color:#000;padding-left:7px;width:53px;"><span class="n ol" style="position:relative;top:1px">10 MHz</span></div>
<div class="b l" style="left:1057px;top:251px;width:60px;height:20px;background:#c8c8c8;color:#000;padding-left:7px;width:53px;"><span class="n ol" style="position:relative;top:1px">20 MHz</span></div>
<div class="b l" style="left:1132px;top:251px;width:60px;height:20px;background:#c8c8c8;color:#000;padding-left:7px;width:53px;"><span class="n ol" style="position:relative;top:1px">50 MHz</span></div>
<div class="b l" style="left:984px;top:274px;width:60px;height:20px;background:#c8c8c8;color:#000;padding-left:7px;width:53px;"><span class="n ol" style="position:relative;top:1px">100 MHz</span></div>
<div class="b l" style="left:1057px;top:274px;width:60px;height:20px;background:#c8c8c8;color:#000;padding-left:7px;width:53px;"><span class="n ol" style="position:relative;top:1px">200 MHz</span></div>
<div class="b l" style="left:1132px;top:274px;width:60px;height:20px;background:#c8c8c8;color:#000;padding-left:7px;width:53px;"><span class="n ol" style="position:relative;top:1px">500 MHz</span></div>
<div class="b l" style="left:984px;top:297px;width:60px;height:20px;background:#c8c8c8;color:#000;padding-left:7px;width:53px;"><span class="n ol" style="position:relative;top:1px">1 GHz</span></div>
<div class="b l" style="left:1057px;top:297px;width:60px;height:20px;background:#c8c8c8;color:#000;padding-left:7px;width:53px;"><span class="n ol" style="position:relative;top:1px">2 GHz</span></div>
<div class="t" style="left:988.5px;top:329.0px;font-size:12px;line-height:14px;color:#000;font-weight:bold;">IF-kHz</div>
<div class="b" style="left:985px;top:348px;width:60px;height:20px;background:#c8c8c8;color:#000;"><span class="n" style="position:relative;top:1px">2048</span></div>
<div class="b" style="left:985px;top:371px;width:60px;height:20px;background:#87cefa;color:#000;"><span class="n" style="position:relative;top:1px">450</span></div>
<div class="b" style="left:985px;top:395px;width:60px;height:20px;background:#c8c8c8;color:#636363;"><span class="n" style="position:relative;top:1px">Zero IF</span></div>
<div class="t" style="left:1061.5px;top:376.6px;font-size:12px;line-height:14px;color:#000;transform:scaleX(0.875);">Clock spur removal</div>
<div class="b" style="left:1155px;top:373px;width:37px;height:20px;background:#c8c8c8;color:#000;"><span class="n">Off</span></div>
<div class="t" style="left:1061.5px;top:399.6px;font-size:12px;line-height:14px;color:#000;transform:scaleX(0.875);">Window</div>
<div style="left:1106px;top:396px;width:86px;height:21px;background:#fff;"></div>
<div style="left:1107px;top:397px;width:84px;height:19px;background:#efefef;"></div>
<div style="left:1107px;top:397px;width:68px;height:19px;background:#fff;"></div>
<div class="t" style="left:1111px;top:399.6px;font-size:12px;line-height:14px;color:#000;transform:scaleX(0.875);">Blackman</div>
<svg style="left:1179.8px;top:405.0px" width="6.4" height="3.6" viewBox="0 0 6.4 3.6"><polygon points="0,0 6.4,0 3.2,3.6" fill="#000"/></svg>
<div class="t" style="left:994.5px;top:431.2px;font-size:12px;line-height:14px;color:#000;transform:scaleX(0.875);">NFFT</div>
<div style="left:1038px;top:428px;width:69px;height:21px;background:#fff;"></div>
<div style="left:1039px;top:429px;width:67px;height:19px;background:#efefef;"></div>
<div style="left:1039px;top:429px;width:50px;height:19px;background:#fff;"></div>
<div class="t" style="left:1043px;top:431.6px;font-size:12px;line-height:14px;color:#000;transform:scaleX(0.875);">32768</div>
<svg style="left:1094.3px;top:437.0px" width="6.4" height="3.6" viewBox="0 0 6.4 3.6"><polygon points="0,0 6.4,0 3.2,3.6" fill="#000"/></svg>
<div class="t" style="left:1116.2px;top:431.2px;font-size:12px;line-height:14px;color:#000;transform:scaleX(0.875);">Hz/bin</div>
<div class="t" style="left:1152.6px;top:431.2px;font-size:12px;line-height:14px;color:#000;font-weight:bold;">15.26</div>
<div style="left:968px;top:461px;width:246px;height:34px;background:#e0e0e0;"></div>
<div class="b" style="left:976px;top:467px;width:70px;height:23px;background:#c8c8c8;color:#000;"><span class="n">Track gen</span></div>
<div class="b" style="left:1060px;top:467px;width:70px;height:23px;background:#87cefa;color:#000;"><span class="n">Input</span></div>
<div style="left:968px;top:499px;width:246px;height:251px;background:#e0e0e0;"></div>
<div class="t" style="left:974.6px;top:501.7px;font-size:12px;line-height:14px;color:#000;font-weight:bold;">Input</div>
<div class="t" style="left:983.6px;top:521.7px;font-size:12px;line-height:14px;color:#000;transform:scaleX(0.875);">RSP Select</div>
<div style="left:1054px;top:517px;width:147px;height:21px;background:#adadad;"></div>
<div style="left:1055px;top:518px;width:145px;height:19px;background:#ebebeb;"></div>
<div class="t" style="left:1058.2px;top:520.8px;font-size:12px;line-height:14px;color:#636363;transform:scaleX(0.875);">RSP1</div>
<svg style="left:1189.0px;top:525.7px" width="6.4" height="3.6" viewBox="0 0 6.4 3.6"><polygon points="0,0 6.4,0 3.2,3.6" fill="#7a7a7a"/></svg>
<div class="b" style="left:1112px;top:544px;width:58px;height:23px;background:#c8c8c8;color:#636363;"><span class="n">Tuner 1</span></div>
<div class="b" style="left:983px;top:571px;width:58px;height:23px;background:#c8c8c8;color:#636363;"><span class="n">Ant A</span></div>
<div class="b" style="left:1048px;top:571px;width:58px;height:23px;background:#c8c8c8;color:#636363;"><span class="n">BC/FM</span></div>
<div class="b" style="left:1112px;top:571px;width:58px;height:23px;background:#c8c8c8;color:#636363;"><span class="n">Tuner 2</span></div>
<div class="b" style="left:983px;top:599px;width:58px;height:23px;background:#c8c8c8;color:#636363;"><span class="n">Ant B</span></div>
<div class="b" style="left:1048px;top:599px;width:58px;height:23px;background:#c8c8c8;color:#636363;"><span class="n">DAB</span></div>
<div class="b" style="left:1112px;top:599px;width:58px;height:23px;background:#c8c8c8;color:#636363;"><span class="n">BiasT</span></div>
<div class="t" style="left:983.6px;top:633.7px;font-size:12px;line-height:14px;color:#000;transform:scaleX(0.875);">dBm Trim</div>
<div style="left:1039px;top:632px;width:46px;height:16px;background:#fff;"></div>
<div style="left:1070px;top:633px;width:14px;height:14px;background:#ececec;box-shadow:inset 0 0 0 1px #d8d8d8;"></div>
<svg style="left:1074.0px;top:635px" width="6" height="3" viewBox="0 0 6 3"><polygon points="0,3 6,3 3,0" fill="#333"/></svg>
<svg style="left:1074.0px;top:642px" width="6" height="3" viewBox="0 0 6 3"><polygon points="0,0 6,0 3,3" fill="#333"/></svg>
<div class="t" style="left:1040px;top:631.6px;font-size:12px;line-height:14px;color:#000;transform:scaleX(0.875);">0.0</div>
<div class="b" style="left:1091px;top:630px;width:29px;height:20px;background:#c8c8c8;color:#000;"><span class="n">Off</span></div>
<div class="b" style="left:1174px;top:629px;width:32px;height:22px;background:#008000;color:#fff;"><span class="n">Cal</span></div>
<div class="t" style="left:983.6px;top:657.7px;font-size:12px;line-height:14px;color:#000;transform:scaleX(0.875);">Offset dB</div>
<div style="left:1039px;top:656px;width:46px;height:16px;background:#fff;"></div>
<div style="left:1070px;top:657px;width:14px;height:14px;background:#ececec;box-shadow:inset 0 0 0 1px #d8d8d8;"></div>
<svg style="left:1074.0px;top:659px" width="6" height="3" viewBox="0 0 6 3"><polygon points="0,3 6,3 3,0" fill="#333"/></svg>
<svg style="left:1074.0px;top:666px" width="6" height="3" viewBox="0 0 6 3"><polygon points="0,0 6,0 3,3" fill="#333"/></svg>
<div class="t" style="left:1040px;top:655.6px;font-size:12px;line-height:14px;color:#000;transform:scaleX(0.875);">0.0</div>
<div class="b" style="left:1092px;top:654px;width:29px;height:20px;background:#c8c8c8;color:#000;"><span class="n">Off</span></div>
<div class="b" style="left:1174px;top:656px;width:32px;height:22px;background:#008000;color:#fff;"><span class="n">ADC</span></div>
<div class="t" style="left:983.6px;top:680.8px;font-size:12px;line-height:14px;color:#000;transform:scaleX(0.875);">PPM Trim</div>
<div style="left:1039px;top:680px;width:46px;height:16px;background:#fff;"></div>
<div style="left:1070px;top:681px;width:14px;height:14px;background:#ececec;box-shadow:inset 0 0 0 1px #d8d8d8;"></div>
<svg style="left:1074.0px;top:683px" width="6" height="3" viewBox="0 0 6 3"><polygon points="0,3 6,3 3,0" fill="#333"/></svg>
<svg style="left:1074.0px;top:690px" width="6" height="3" viewBox="0 0 6 3"><polygon points="0,0 6,0 3,3" fill="#333"/></svg>
<div class="t" style="left:1040px;top:679.6px;font-size:12px;line-height:14px;color:#000;transform:scaleX(0.875);">0.0</div>
<div class="t" style="left:983.6px;top:705.9px;font-size:12px;line-height:14px;color:#000;transform:scaleX(0.875);">LNA gr</div>
<div class="t" style="left:1048.6px;top:705.9px;font-size:12px;line-height:14px;color:#000;font-weight:bold;">43</div>
<div class="t" style="left:1103.7px;top:705.9px;font-size:12px;line-height:14px;color:#000;transform:scaleX(0.875);">System gr</div>
<div class="t" style="left:1169px;top:705.9px;font-size:12px;line-height:14px;color:#000;font-weight:bold;">102</div>
<div class="t" style="left:983.6px;top:723.7px;font-size:12px;line-height:14px;color:#000;transform:scaleX(0.875);">Current gain</div>
<div class="t" style="left:1048.6px;top:723.7px;font-size:12px;line-height:14px;color:#000;font-weight:bold;">59</div>
</div>
</body></html>
